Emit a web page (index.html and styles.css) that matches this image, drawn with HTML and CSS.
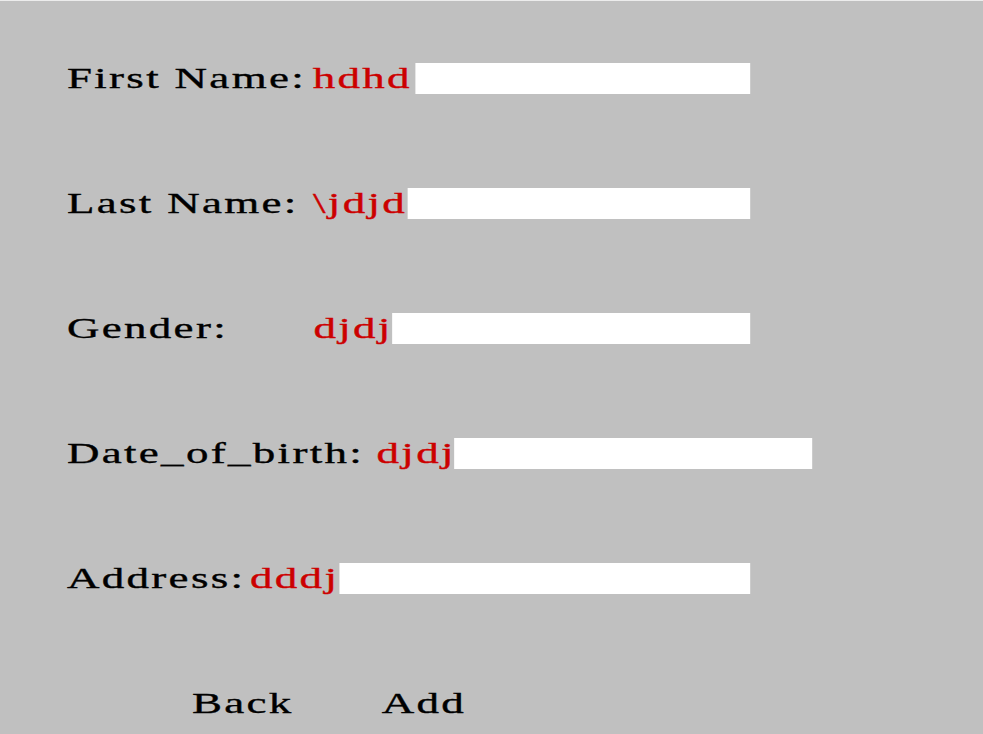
FILE: index.html
```html
<!DOCTYPE html>
<html>
<head>
<meta charset="utf-8">
<title>Student Details</title>
<link rel="stylesheet" href="styles.css">
</head>
<body>
<div class="page">
  <form class="form">
    <div class="row">
      <span class="label">First Name:</span>
      <span class="value v-first">hdhd</span>
      <input class="field" type="text">
    </div>
    <div class="row">
      <span class="label">Last Name:</span>
      <span class="value v-last">\jdjd</span>
      <input class="field" type="text">
    </div>
    <div class="row">
      <span class="label l-gender">Gender:</span>
      <span class="value">djdj</span>
      <input class="field" type="text">
    </div>
    <div class="row row-wide">
      <span class="label">Date_of_birth:</span>
      <span class="value v-dob">djdj</span>
      <input class="field" type="text">
    </div>
    <div class="row">
      <span class="label">Address:</span>
      <span class="value">dddj</span>
      <input class="field" type="text">
    </div>
    <div class="row buttons">
      <span class="btn">Back</span>
      <span class="btn">Add</span>
    </div>
  </form>
</div>
</body>
</html>
```
FILE: styles.css
```css
html, body {
  margin: 0;
  padding: 0;
  background: #c0c0c0;
}
body {
  border-top: 1px solid #ececec;
  height: 733px;
  overflow: hidden;
}
.page {
  transform: scaleX(1.55);
  transform-origin: 0 0;
  width: 634px;
}
.form {
  display: flex;
  flex-direction: column;
  gap: 90px;
  padding: 60px 0 0 43.2px;
  font-family: "Liberation Serif", "Times New Roman", serif;
  font-size: 29px;
  letter-spacing: 1.5px;
  color: #000;
  -webkit-text-stroke: 0.35px currentColor;
}
.row {
  display: flex;
  align-items: center;
  height: 35px;
  width: 440.7px;
}
.row-wide {
  width: 481.3px;
}
.label {
  white-space: nowrap;
  margin-right: 3px;
}
.l-gender {
  min-width: 156px;
}
.value {
  color: #cc0000;
  white-space: nowrap;
}
.v-first {
  margin-left: 1.3px;
  margin-right: 2px;
}
.v-last {
  margin-left: 6.3px;
}
.v-dob {
  margin-left: 5px;
  margin-right: -1px;
}
.field {
  flex: 1;
  min-width: 0;
  height: 31px;
  border: none;
  padding: 0;
  margin: 0;
  background: #fff;
  outline: none;
}
.buttons {
  padding-left: 80.7px;
  gap: 56.8px;
}
.btn {
  white-space: nowrap;
}
```
